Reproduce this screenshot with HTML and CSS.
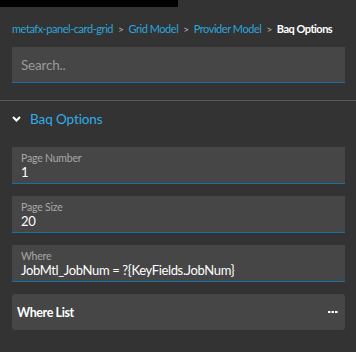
FILE: index.html
```html
<!DOCTYPE html>
<html>
<head>
<meta charset="utf-8">
<link rel="stylesheet" href="styles.css">
</head>
<body>
<div class="topbar"></div>
<div class="panel">
  <nav class="crumbs">
    <span class="crumb link">metafx-panel-card-grid</span>
    <span class="sep">&gt;</span>
    <span class="crumb link">Grid Model</span>
    <span class="sep">&gt;</span>
    <span class="crumb link">Provider Model</span>
    <span class="sep">&gt;</span>
    <span class="crumb current">Baq Options</span>
  </nav>
  <div class="search">Search..</div>
</div>
<div class="divider"></div>
<div class="panel">
  <div class="section-head">
    <svg class="chev" width="9" height="6" viewBox="0 0 9 6"><path d="M1 1 L4.5 4.5 L8 1" fill="none" stroke="#fff" stroke-width="2"/></svg>
    <span class="section-title">Baq Options</span>
  </div>
  <div class="fields">
    <div class="field">
      <div class="label">Page Number</div>
      <div class="value">1</div>
    </div>
    <div class="field">
      <div class="label">Page Size</div>
      <div class="value">20</div>
    </div>
    <div class="field">
      <div class="label">Where</div>
      <div class="value">JobMtl_JobNum = ?{KeyFields.JobNum}</div>
    </div>
    <div class="card">
      <span class="card-title">Where List</span>
      <svg class="dots" width="10" height="3" viewBox="0 0 10 3"><rect x="0" y="0" width="2.5" height="2" fill="#fff"/><rect x="3.5" y="0" width="2.5" height="2" fill="#fff"/><rect x="7" y="0" width="2.5" height="2" fill="#fff"/></svg>
    </div>
  </div>
</div>
</body>
</html>
```
FILE: styles.css
```css
html, body {
  margin: 0;
  padding: 0;
  background: #333333;
  font-family: Lato, "Open Sans", sans-serif;
  width: 356px;
  height: 352px;
  overflow: hidden;
}
.topbar {
  width: 178px;
  height: 7px;
  background: #000;
}
.panel {
  padding: 0 11px 0 12px;
}
.crumbs {
  margin-top: 15px;
  height: 14px;
  line-height: 14px;
  font-size: 11px;
  letter-spacing: -0.45px;
  display: flex;
  align-items: center;
  gap: 5px;
  white-space: nowrap;
}
.crumb.link { color: #2ba6dc; }
.crumb.current { color: #ffffff; font-weight: 700; letter-spacing: -0.5px; }
.sep { color: #bbbbbb; font-size: 10px; }
.search {
  margin-top: 11px;
  height: 35px;
  background: #464646;
  border-bottom: 1px solid #1b6ea3;
  color: #9a9a9a;
  font-size: 13.5px;
  letter-spacing: -0.2px;
  display: flex;
  align-items: center;
  padding-left: 9px;
}
.divider {
  margin-top: 17px;
  height: 1px;
  background: #575757;
}
.section-head {
  height: 36px;
  display: flex;
  align-items: center;
}
.chev { margin-right: 9px; }
.section-title {
  color: #31acea;
  font-size: 13.5px;
  letter-spacing: -0.1px;
}
.fields {
  margin-top: 10px;
  display: flex;
  flex-direction: column;
  gap: 12px;
}
.field {
  height: 36px;
  background: #464646;
  border-bottom: 1px solid #1b6ea3;
  padding-left: 9px;
}
.label {
  color: #a8a8a8;
  font-size: 10.5px;
  letter-spacing: -0.2px;
  padding-top: 5px;
  line-height: 13px;
}
.value {
  color: #ffffff;
  font-size: 13px;
  letter-spacing: -0.35px;
  line-height: 15px;
}
.card {
  height: 36px;
  background: #464646;
  border-radius: 3px;
  display: flex;
  align-items: center;
  justify-content: space-between;
  padding: 0 7px 0 5px;
}
.card-title {
  color: #fff;
  font-size: 12.5px;
  font-weight: 700;
  letter-spacing: -0.4px;
}
.dots {
  display: block;
}
```
